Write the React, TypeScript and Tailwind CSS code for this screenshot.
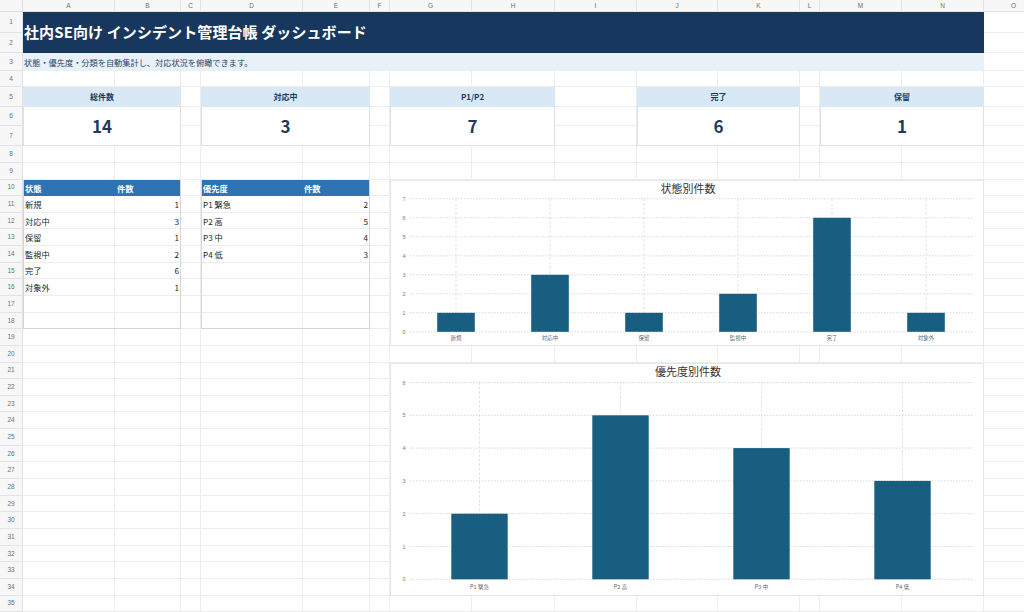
import React from "react";

const COLS = ["A", "B", "C", "D", "E", "F", "G", "H", "I", "J", "K", "L", "M", "N", "O"];
const ROW_COUNT = 35;

const gridCols =
  "grid-cols-[23px_92px_66px_20px_102px_67px_20px_82px_83px_82px_81px_82px_20px_82px_82px_60px]";
const gridRows =
  "grid-rows-[12px_21px_20px_18px_16px_20px_19px_20px_17px_16.5px_repeat(26,16.65px)]";

const jp = "font-['Noto_Sans_CJK_JP','Noto_Sans',sans-serif]";

// Background sheet: column letters, row numbers and empty gridline cells
function SheetCells() {
  const cells: React.ReactNode[] = [];
  cells.push(
    <div key="corner" className="bg-[#f7f7f7] border-r border-b border-[#dedede]" />
  );
  COLS.forEach((c) =>
    cells.push(
      <div
        key={`h-${c}`}
        className="bg-[#f7f7f7] border-r border-b border-[#e3e3e3] flex items-center justify-center text-[6.5px] text-[#707070] font-['Liberation_Sans',sans-serif]"
      >
        {c}
      </div>
    )
  );
  for (let r = 1; r <= ROW_COUNT; r++) {
    cells.push(
      <div
        key={`r-${r}`}
        className="bg-[#f7f7f7] border-r border-b border-[#e3e3e3] flex items-center justify-center text-[6.5px] text-[#707070] font-['Liberation_Sans',sans-serif]"
      >
        {r}
      </div>
    );
    COLS.forEach((c) =>
      cells.push(<div key={`${c}${r}`} className="border-r border-b border-[#ededed]" />)
    );
  }
  return <>{cells}</>;
}

type KpiProps = { label: string; value: number; className: string };

function Kpi({ label, value, className }: KpiProps) {
  return (
    <div className={`${className} row-start-6 row-span-3 flex flex-col`}>
      <div className="h-[20px] bg-[#d9e8f5] flex items-center justify-center text-[8px] font-bold text-[#1f3a5c]">
        {label}
      </div>
      <div className="flex-1 bg-white border border-t-0 border-[#e0e0e0] flex items-center justify-center text-[17px] font-bold text-[#1f3a5c]">
        {value}
      </div>
    </div>
  );
}

type Row = { name: string; count: number };

function CountTable({
  head,
  rows,
  className,
  firstWidth,
}: {
  head: string;
  rows: Row[];
  className: string;
  firstWidth: string;
}) {
  const body = [...rows];
  while (body.length < 8) body.push({ name: "", count: NaN });
  return (
    <div className={`${className} row-start-11 row-span-9 flex flex-col border-r border-b border-l border-[#d6d6d6]`}>
      <div className="h-[16.5px] bg-[#2e74b5] flex text-white text-[8.2px] font-bold">
        <div className={`${firstWidth} flex items-center pl-[1px]`}>{head}</div>
        <div className="flex-1 flex items-center pl-[1px]">件数</div>
      </div>
      {body.map((r, i) => (
        <div key={i} className="h-[16.65px] flex items-center text-[8.2px] text-[#262626]">
          <div className={`${firstWidth} pl-[1px]`}>{r.name}</div>
          <div className="flex-1 text-right pr-[1px]">{isNaN(r.count) ? "" : r.count}</div>
        </div>
      ))}
    </div>
  );
}

type ChartProps = {
  title: string;
  data: Row[];
  max: number;
  height: number;
  zeroY: number;
  unit: number;
  labelY: number;
};

function BarChart({ title, data, max, height, zeroY, unit, labelY }: ChartProps) {
  const width = 594;
  const left = 18;
  const right = 582;
  const step = (right - left) / data.length;
  const barW = step * 0.4;
  const ticks = Array.from({ length: max + 1 }, (_, i) => i);
  const topY = zeroY - max * unit;
  return (
    <svg width={width} height={height} viewBox={`0 0 ${width} ${height}`} className="block">
      <text
        x={297}
        y={11.5}
        textAnchor="middle"
        fontSize="11"
        fill="#333333"
        fontFamily="'Noto Sans CJK JP', sans-serif"
      >
        {title}
      </text>
      {ticks.map((t) => {
        const y = zeroY - t * unit;
        return (
          <g key={t}>
            <line x1={19} x2={583} y1={y} y2={y} stroke="#cfcfcf" strokeWidth="0.8" strokeDasharray="1.5 1.5" />
            <text
              x={13}
              y={y + 2}
              textAnchor="middle"
              fontSize="5.5"
              fill="#777777"
              fontFamily="'Liberation Sans', sans-serif"
            >
              {t}
            </text>
          </g>
        );
      })}
      {data.map((d, i) => {
        const cx = left + step * (i + 0.5);
        return (
          <line
            key={`v-${i}`}
            x1={cx}
            x2={cx}
            y1={topY}
            y2={zeroY}
            stroke="#d9d9d9"
            strokeWidth="0.8"
            strokeDasharray="2.5 2"
          />
        );
      })}
      {data.map((d, i) => {
        const cx = left + step * (i + 0.5);
        const h = d.count * unit;
        return (
          <g key={`b-${i}`}>
            <rect x={cx - barW / 2} y={zeroY - h} width={barW} height={h} fill="#175e80" />
            <text
              x={cx}
              y={labelY + 2}
              textAnchor="middle"
              fontSize="5.5"
              fill="#666666"
              fontFamily="'Noto Sans CJK JP', sans-serif"
            >
              {d.name}
            </text>
          </g>
        );
      })}
    </svg>
  );
}

const statusRows: Row[] = [
  { name: "新規", count: 1 },
  { name: "対応中", count: 3 },
  { name: "保留", count: 1 },
  { name: "監視中", count: 2 },
  { name: "完了", count: 6 },
  { name: "対象外", count: 1 },
];

const priorityRows: Row[] = [
  { name: "P1 緊急", count: 2 },
  { name: "P2 高", count: 5 },
  { name: "P3 中", count: 4 },
  { name: "P4 低", count: 3 },
];

export default function App() {
  return (
    <div className={`w-[1024px] h-[612px] overflow-hidden bg-white grid ${jp}`}>
      <div className={`col-start-1 row-start-1 grid ${gridCols} ${gridRows}`}>
        <SheetCells />
      </div>

      <div className={`col-start-1 row-start-1 grid ${gridCols} ${gridRows}`}>
        {/* Title banner */}
        <div className="col-start-2 col-span-14 row-start-2 row-span-2 bg-[#17375e] flex items-center pl-[1px] text-white text-[15px] font-bold tracking-[0.1px]">
          社内SE向け インシデント管理台帳 ダッシュボード
        </div>
        {/* Description */}
        <div className="col-start-2 col-span-14 row-start-4 bg-[#e8f0f8] flex items-center pl-[1px] text-[8.2px] text-[#2b4566]">
          状態・優先度・分類を自動集計し、対応状況を俯瞰できます。
        </div>

        <Kpi label="総件数" value={14} className="col-start-2 col-span-2" />
        <Kpi label="対応中" value={3} className="col-start-5 col-span-2" />
        <Kpi label="P1/P2" value={7} className="col-start-8 col-span-2" />
        <Kpi label="完了" value={6} className="col-start-11 col-span-2" />
        <Kpi label="保留" value={1} className="col-start-14 col-span-2" />

        <CountTable head="状態" rows={statusRows} className="col-start-2 col-span-2" firstWidth="w-[92px]" />
        <CountTable head="優先度" rows={priorityRows} className="col-start-5 col-span-2" firstWidth="w-[101px]" />

        <div className="col-start-8 col-span-8 row-start-11 row-span-10 bg-white border border-[#e6e6e6] overflow-hidden">
          <BarChart title="状態別件数" data={statusRows} max={7} height={166} zeroY={150.8} unit={19} labelY={157} />
        </div>
        <div className="col-start-8 col-span-8 row-start-22 row-span-14 bg-white border border-[#e6e6e6] overflow-hidden">
          <BarChart title="優先度別件数" data={priorityRows} max={6} height={233} zeroY={215.3} unit={32.8} labelY={223} />
        </div>
      </div>
    </div>
  );
}
